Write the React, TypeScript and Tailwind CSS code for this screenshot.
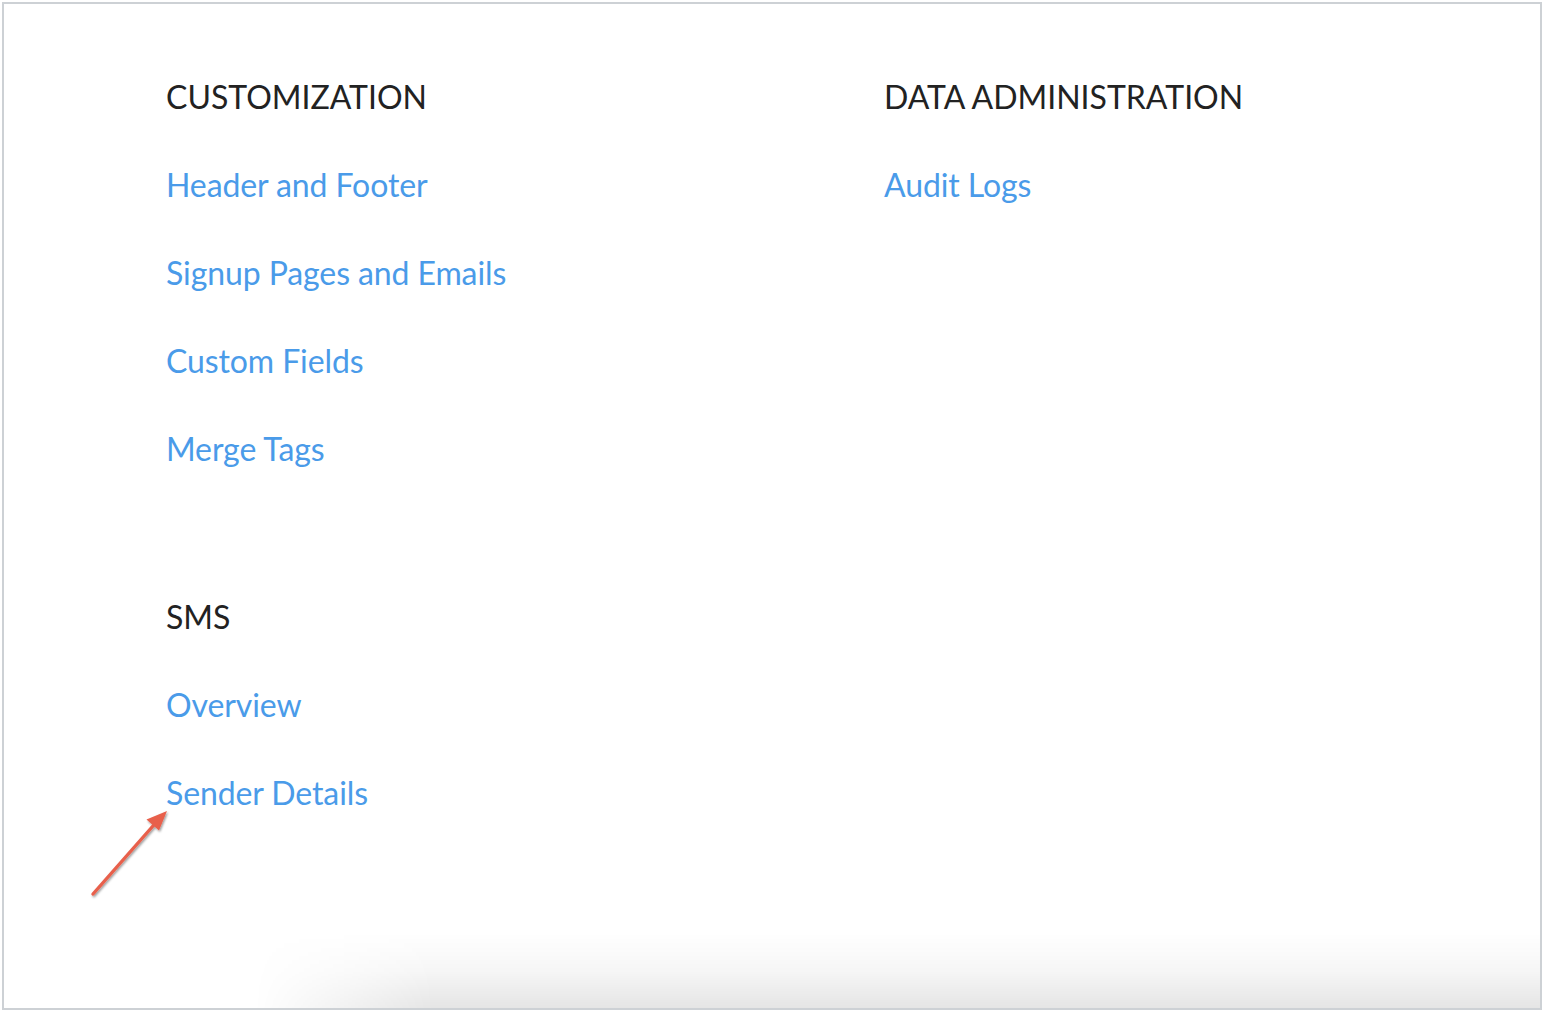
import React from 'react';

type Section = {
  title: string;
  links: string[];
};

const leftSections: Section[] = [
  { title: 'CUSTOMIZATION', links: ['Header and Footer', 'Signup Pages and Emails', 'Custom Fields', 'Merge Tags'] },
  { title: 'SMS', links: ['Overview', 'Sender Details'] },
];

const rightSections: Section[] = [
  { title: 'DATA ADMINISTRATION', links: ['Audit Logs'] },
];

function SettingsSection({ section, className = '' }: { section: Section; className?: string }) {
  return (
    <div className={`flex flex-col ${className}`}>
      <h3 className="text-[32px] leading-[88px] text-[#222222] font-normal">{section.title}</h3>
      <ul className="flex flex-col">
        {section.links.map((link) => (
          <li key={link} className="text-[32px] leading-[88px] tracking-[-0.1px]">
            <a href="#" className="text-[#4a9be9] hover:underline">
              {link}
            </a>
          </li>
        ))}
      </ul>
    </div>
  );
}

function PointerArrow() {
  return (
    <svg
      className="absolute left-[79px] top-[798px] pointer-events-none"
      width="100"
      height="105"
      viewBox="0 0 100 105"
      fill="none"
    >
      <defs>
        <filter id="arrowShadow" x="-20%" y="-20%" width="140%" height="140%">
          <feDropShadow dx="1" dy="1.5" stdDeviation="1.2" floodColor="#000" floodOpacity="0.4" />
        </filter>
      </defs>
      <g filter="url(#arrowShadow)">
        <line x1="10" y1="92" x2="77" y2="16" stroke="#e8604c" strokeWidth="3.4" strokeLinecap="round" />
        <path d="M84 9 L63.5 17.5 L76 28.5 Z" fill="#e8604c" />
      </g>
    </svg>
  );
}

export default function App() {
  return (
    <div className="w-[1544px] h-[1012px] bg-white p-[2px] font-['Lato','Liberation_Sans',sans-serif]">
      <div className="relative h-full w-full overflow-hidden border-2 border-[#cdd1d5] bg-white">
        <div className="grid grid-cols-[718px_1fr] pl-[162px] pt-[49px]">
          <div className="flex flex-col">
            <SettingsSection section={leftSections[0]} />
            <SettingsSection section={leftSections[1]} className="mt-[80px]" />
          </div>
          <div className="flex flex-col">
            {rightSections.map((s) => (
              <SettingsSection key={s.title} section={s} />
            ))}
          </div>
        </div>

        <PointerArrow />

        {/* page curl shadow along the bottom edge */}
        <div className="pointer-events-none absolute bottom-0 left-[250px] right-0 h-[75px] bg-[linear-gradient(to_bottom,rgba(0,0,0,0),rgba(0,0,0,0.035)_50%,rgba(0,0,0,0.1))] [mask-image:linear-gradient(to_right,transparent,black_180px)]" />
      </div>
    </div>
  );
}
